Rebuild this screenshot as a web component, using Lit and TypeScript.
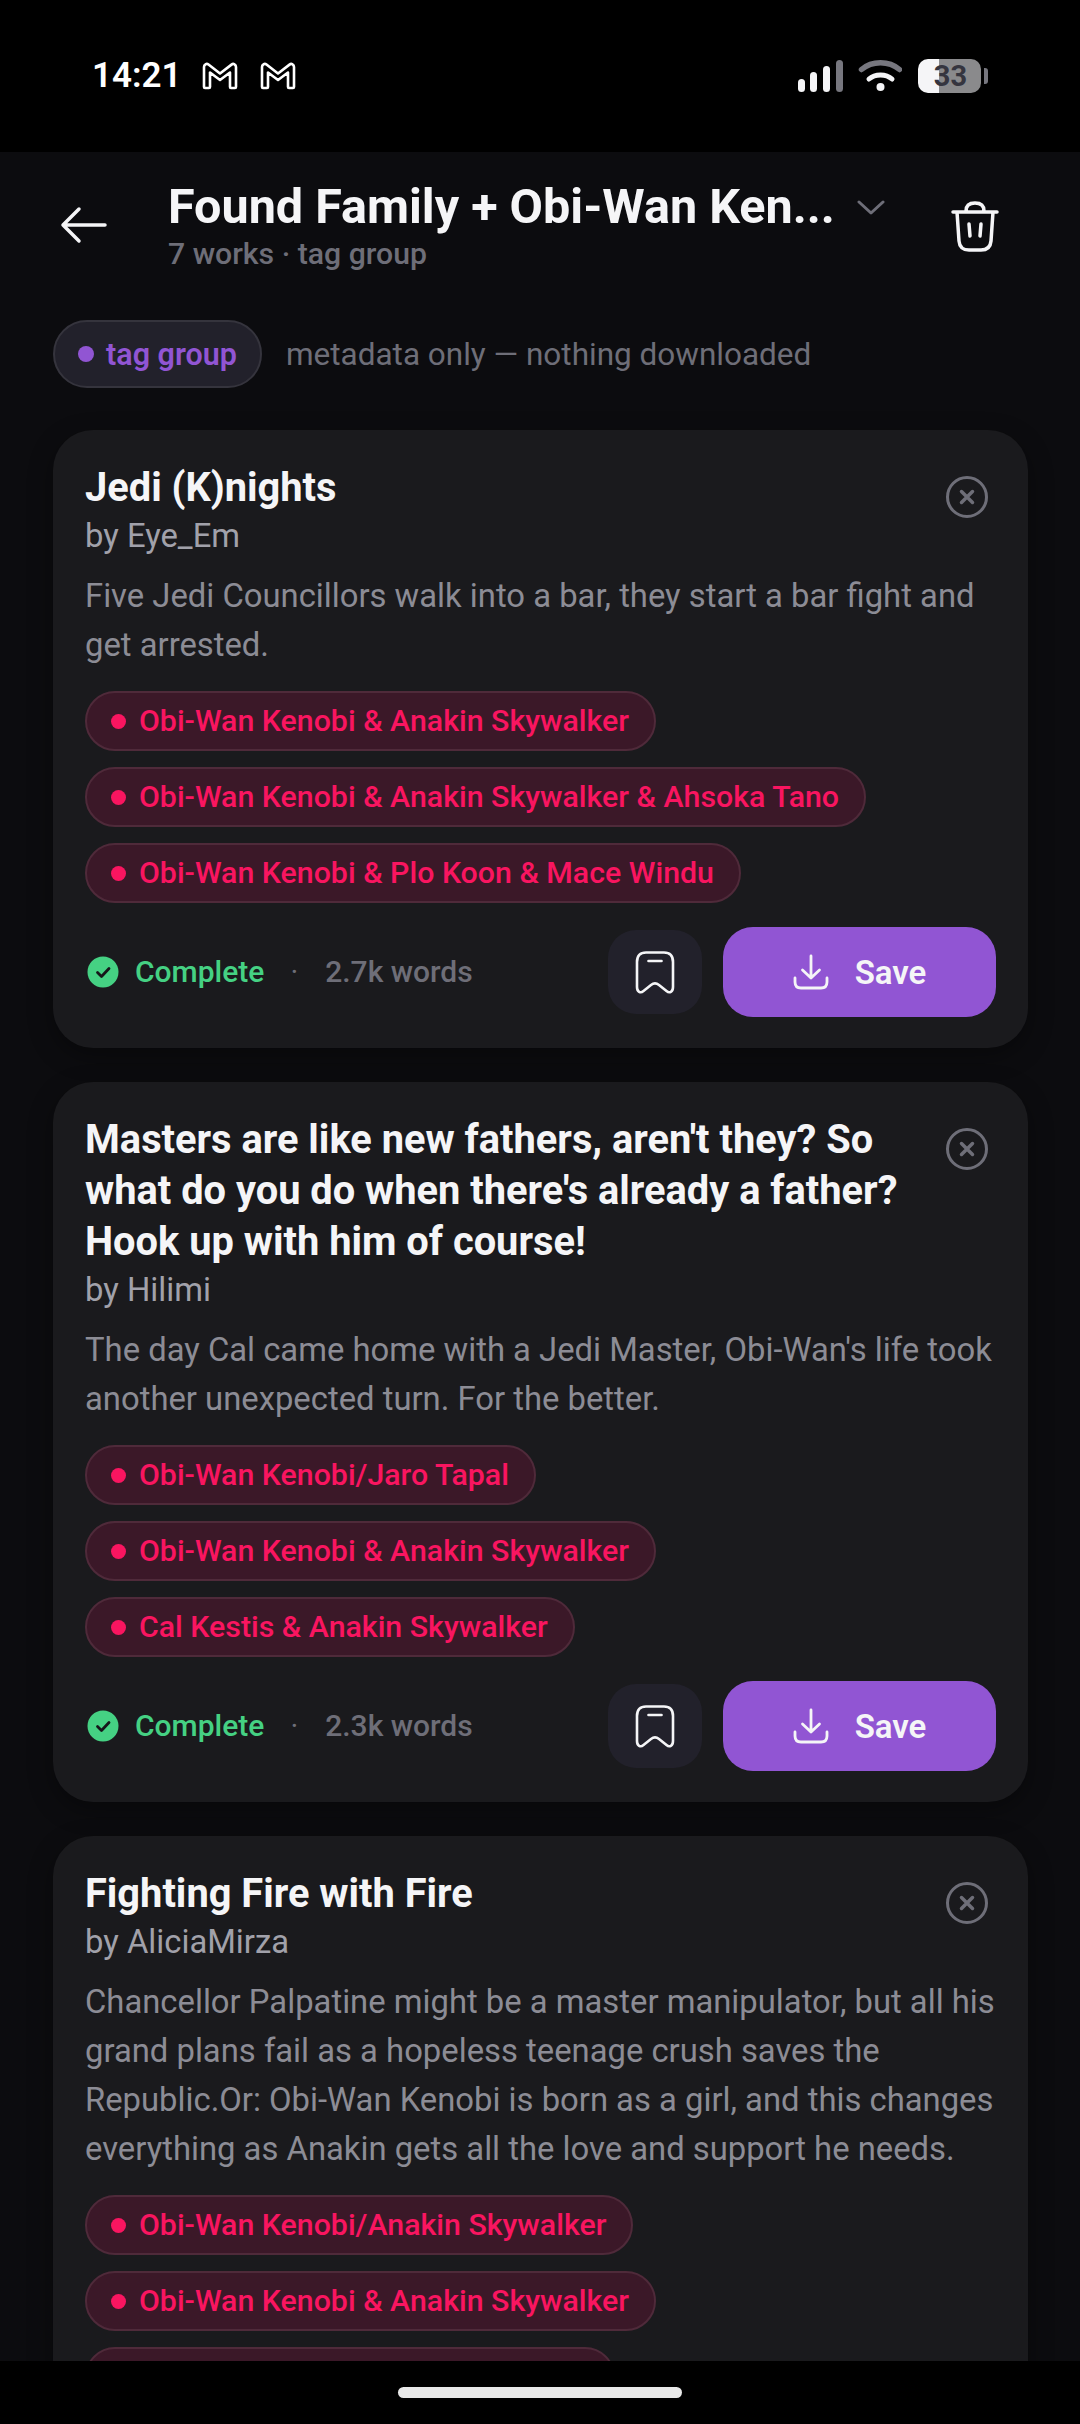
import { LitElement, html, css, svg } from "lit";
import { customElement } from "lit/decorators.js";

type Work = { title: string[]; by: string; desc: string[]; tags: string[]; words?: string };
const works: Work[] = [
  { title: ["Jedi (K)nights"], by: "Eye_Em", desc: ["Five Jedi Councillors walk into a bar, they start a bar fight and", "get arrested."],
    tags: ["Obi-Wan Kenobi & Anakin Skywalker", "Obi-Wan Kenobi & Anakin Skywalker & Ahsoka Tano", "Obi-Wan Kenobi & Plo Koon & Mace Windu"], words: "2.7k words" },
  { title: ["Masters are like new fathers, aren't they? So", "what do you do when there's already a father?", "Hook up with him of course!"], by: "Hilimi",
    desc: ["The day Cal came home with a Jedi Master, Obi-Wan's life took", "another unexpected turn. For the better."],
    tags: ["Obi-Wan Kenobi/Jaro Tapal", "Obi-Wan Kenobi & Anakin Skywalker", "Cal Kestis & Anakin Skywalker"], words: "2.3k words" },
  { title: ["Fighting Fire with Fire"], by: "AliciaMirza",
    desc: ["Chancellor Palpatine might be a master manipulator, but all his", "grand plans fail as a hopeless teenage crush saves the", "Republic.Or: Obi-Wan Kenobi is born as a girl, and this changes", "everything as Anakin gets all the love and support he needs."],
    tags: ["Obi-Wan Kenobi/Anakin Skywalker", "Obi-Wan Kenobi & Anakin Skywalker", "Anakin Skywalker & Ahsoka Tano"] },
];

const gm = svg`<path d="M2 25V5C2 2.500 4.500 1 6.500 2.600L18 11.500L29.500 2.600C31.500 1 34 2.500 34 5V25C34 25.600 33.600 26 33 26H29C28.400 26 28 25.600 28 25V10.500L18 18L8 10.500V25C8 25.600 7.600 26 7 26H3C2.400 26 2 25.600 2 25Z" fill="none" stroke="#fff" stroke-width="2.600" stroke-linejoin="round"/>`;

@customElement("app-root")
export class AppRoot extends LitElement {
  static styles = css`
    :host { display: flex; flex-direction: column; width: 1080px; height: 2424px; overflow: hidden; background: #0c0c0f; font-family: Roboto, "Noto Sans", sans-serif; color: #f5f5f7; }
    .status { flex: none; height: 152px; background: #000; display: flex; align-items: center; padding: 0 92px 0 92px; box-sizing: border-box; }
    .time { font-size: 35px; font-weight: 600; color: #fff; line-height: 40px; margin-top: -1px; width: 110px; flex: none; }
    .gm { width: 36px; height: 28px; margin-right: 22px; }
    .status-right { margin-left: auto; display: flex; align-items: center; }
    .sig { width: 104px; height: 34px; }
    .batt { position: relative; margin-left: 16px; width: 63px; height: 34px; border-radius: 10px; background: linear-gradient(90deg, #f5f5f7 21px, #8a8a8c 21px); color: #35353f; font-size: 29px; font-weight: 700; display: flex; align-items: center; justify-content: center; line-height: 34px; padding-left: 2px; box-sizing: border-box; }
    .cap { margin-left: 3px; width: 4px; height: 16px; border-radius: 0 3px 3px 0; background: #77777f; }
    .header { flex: none; display: flex; align-items: flex-start; height: 168px; padding: 28px 0 0 0; box-sizing: border-box; }
    .back { width: 48px; height: 40px; margin: 25px 0 0 60px; flex: none; }
    .hd-text { margin-left: 60px; width: 672px; flex: none; }
    .hd-title { font-size: 48.500px; font-weight: 700; line-height: 54px; white-space: nowrap; }
    .hd-sub { font-size: 30.200px; line-height: 36px; color: #6e6e78; margin-top: 2px; font-weight: 500; }
    .chev { width: 28px; height: 16px; margin: 20px 0 0 17px; flex: none; }
    .trash { width: 48px; height: 52px; margin: 20px 0 0 66px; flex: none; }
    .meta { flex: none; display: flex; align-items: center; padding: 0 0 0 53px; height: 68px; }
    .meta-pill { display: flex; align-items: center; box-sizing: border-box; height: 68px; padding: 0 23px; gap: 12px; border-radius: 34px; background: #22212b; border: 2px solid #35343d; color: #9155d3; font-size: 30.500px; font-weight: 600; }
    .meta-pill i { width: 16px; height: 16px; border-radius: 50%; background: #9155d3; }
    .meta-text { color: #6e6e78; font-size: 31.500px; margin-left: 24px; }
    .list { flex: 1; min-height: 0; overflow: hidden; padding: 42px 52px 0 53px; display: flex; flex-direction: column; gap: 34px; }
    .card { flex: none; background: #1a1a1d; border-radius: 40px; padding: 32px 32px 31px; box-shadow: 0 8px 24px rgba(0,0,0,.35); position: relative; }
    .title { font-size: 39.800px; line-height: 51px; font-weight: 700; color: #f5f5f7; white-space: nowrap; }
    .by { font-size: 32.800px; line-height: 46px; color: #a1a1aa; }
    .desc { font-size: 32.800px; line-height: 49px; color: #8c8c95; margin-top: 13px; white-space: nowrap; }
    .close { position: absolute; top: 45px; right: 39px; width: 44px; height: 44px; }
    .tags { display: flex; flex-direction: column; align-items: flex-start; gap: 16px; margin-top: 21px; }
    .tag { display: flex; align-items: center; box-sizing: border-box; height: 60px; padding: 0 25px 2px 24px; gap: 13px; border-radius: 30px; background: #3b1828; border: 2px solid #4f2a3a; color: #f91560; font-size: 30.300px; font-weight: 500; white-space: nowrap; }
    .tag i { width: 15px; height: 15px; border-radius: 50%; background: #f91560; flex: none; margin-top: 2px; }
    .foot { display: flex; align-items: center; margin-top: 24px; height: 90px; }
    .check { width: 32px; height: 32px; margin-left: 2px; }
    .complete { color: #45d183; font-size: 30px; font-weight: 500; margin: 0 0 2px 16px; }
    .dot { color: #6e6e78; font-size: 30px; margin: 0 0 2px 26px; }
    .words { color: #6e6e78; font-size: 30px; font-weight: 500; margin: 0 0 2px 27px; }
    .bm { margin-left: auto; width: 94px; height: 84px; border-radius: 28px; background: #22212b; display: flex; align-items: center; justify-content: center; }
    .bm svg { width: 40px; height: 43px; }
    .save { margin-left: 21px; width: 273px; height: 90px; border-radius: 30px; background: #9155d3; display: flex; align-items: center; justify-content: center; gap: 26px; font-size: 33px; font-weight: 600; color: #f5f5f7; }
    .save svg { width: 36px; height: 36px; }
    .nav { flex: none; height: 63px; background: #000; display: flex; justify-content: center; padding-top: 26px; box-sizing: border-box; }
    .nav i { width: 284px; height: 11px; border-radius: 6px; background: #e8e8e8; }
  `;

  private card(w: Work) {
    return html`<div class="card">
      <svg class="close" viewBox="0 0 44 44" fill="none" stroke="#6e6e78"><circle cx="22" cy="22" r="19.500" stroke-width="3"/><path d="M16.500 16.500l11 11M27.500 16.500l-11 11" stroke-width="3.500" stroke-linecap="round"/></svg>
      <div class="title">${w.title.map((t) => html`<div>${t}</div>`)}</div>
      <div class="by">by ${w.by}</div>
      <div class="desc">${w.desc.map((t) => html`<div>${t}</div>`)}</div>
      <div class="tags">${w.tags.map((t) => html`<div class="tag"><i></i>${t}</div>`)}</div>
      ${w.words ? html`<div class="foot">
        <svg class="check" viewBox="0 0 32 32"><circle cx="16" cy="16" r="15.500" fill="#45d183"/><path d="M10.500 16.500l4 4 7.500-8" fill="none" stroke="#16161a" stroke-width="2.800" stroke-linecap="round" stroke-linejoin="round"/></svg>
        <span class="complete">Complete</span><span class="dot">·</span><span class="words">${w.words}</span>
        <div class="bm"><svg viewBox="0 0 40 43" fill="none" stroke="#f5f5f7" stroke-width="2.600" stroke-linecap="round" stroke-linejoin="round"><path d="M2 11C2 4.500 5 1.500 11 1.500H29C35 1.500 38 4.500 38 11V36C38 41 34.500 42.500 31.500 40L24 34C21.500 32 18.500 32 16 34L8.500 40C5.500 42.500 2 41 2 36Z"/><path d="M13.500 10H26.500"/></svg></div>
        <div class="save"><svg viewBox="0 0 36 36" fill="none" stroke="#f5f5f7" stroke-width="2.800" stroke-linecap="round" stroke-linejoin="round"><path d="M18 2V24M9.500 16L18 24L26.500 16"/><path d="M2 24V28C2 32 4 34 8 34H28C32 34 34 32 34 28V24"/></svg>Save</div>
      </div>` : ""}
    </div>`;
  }

  render() {
    return html`
      <div class="status">
        <span class="time">14:21</span>
        <svg class="gm" viewBox="0 0 36 28">${gm}</svg>
        <svg class="gm" viewBox="0 0 36 28">${gm}</svg>
        <div class="status-right">
          <svg class="sig" viewBox="0 0 104 34">
            <g stroke-width="7" stroke-linecap="round">
              <path d="M3.500 23.500V29.500" stroke="#f5f5f7"/><path d="M15.500 16.500V29.500" stroke="#f5f5f7"/><path d="M28.500 10.500V29.500" stroke="#f5f5f7"/><path d="M41.500 4.500V29.500" stroke="#77777f"/>
            </g>
            <path d="M63.500 10.500C74 1.500 91 1.500 101.500 10.500" fill="none" stroke="#77777f" stroke-width="5.500" stroke-linecap="round"/>
            <path d="M71 20C77 14.500 88 14.500 94 20" fill="none" stroke="#f5f5f7" stroke-width="5" stroke-linecap="round"/>
            <circle cx="82.500" cy="28" r="4" fill="#f5f5f7"/>
          </svg>
          <div class="batt">33</div><div class="cap"></div>
        </div>
      </div>
      <div class="header">
        <svg class="back" viewBox="0 0 48 40" fill="none" stroke="#f5f5f7" stroke-width="3.500" stroke-linecap="round" stroke-linejoin="round"><path d="M45 20H3M19 4L3 20L19 36"/></svg>
        <div class="hd-text"><div class="hd-title">Found Family + Obi-Wan Ken...</div><div class="hd-sub">7 works · tag group</div></div>
        <svg class="chev" viewBox="0 0 28 16" fill="none" stroke="#6e6e78" stroke-width="3" stroke-linecap="round" stroke-linejoin="round"><path d="M2 2L14 13L26 2"/></svg>
        <svg class="trash" viewBox="0 0 48 52" fill="none" stroke="#f5f5f7" stroke-width="3.500" stroke-linecap="round" stroke-linejoin="round"><path d="M2 12H46M15 11C15 6 18 3 24 3S33 6 33 11M6 12L8 41C8.500 47 12 50 18 50H30C36 50 39.500 47 40 41L42 12M18 24L19 36M30 24L29 36"/></svg>
      </div>
      <div class="meta"><div class="meta-pill"><i></i>tag group</div><span class="meta-text">metadata only — nothing downloaded</span></div>
      <div class="list">${works.map((w) => this.card(w))}</div>
      <div class="nav"><i></i></div>
    `;
  }
}
